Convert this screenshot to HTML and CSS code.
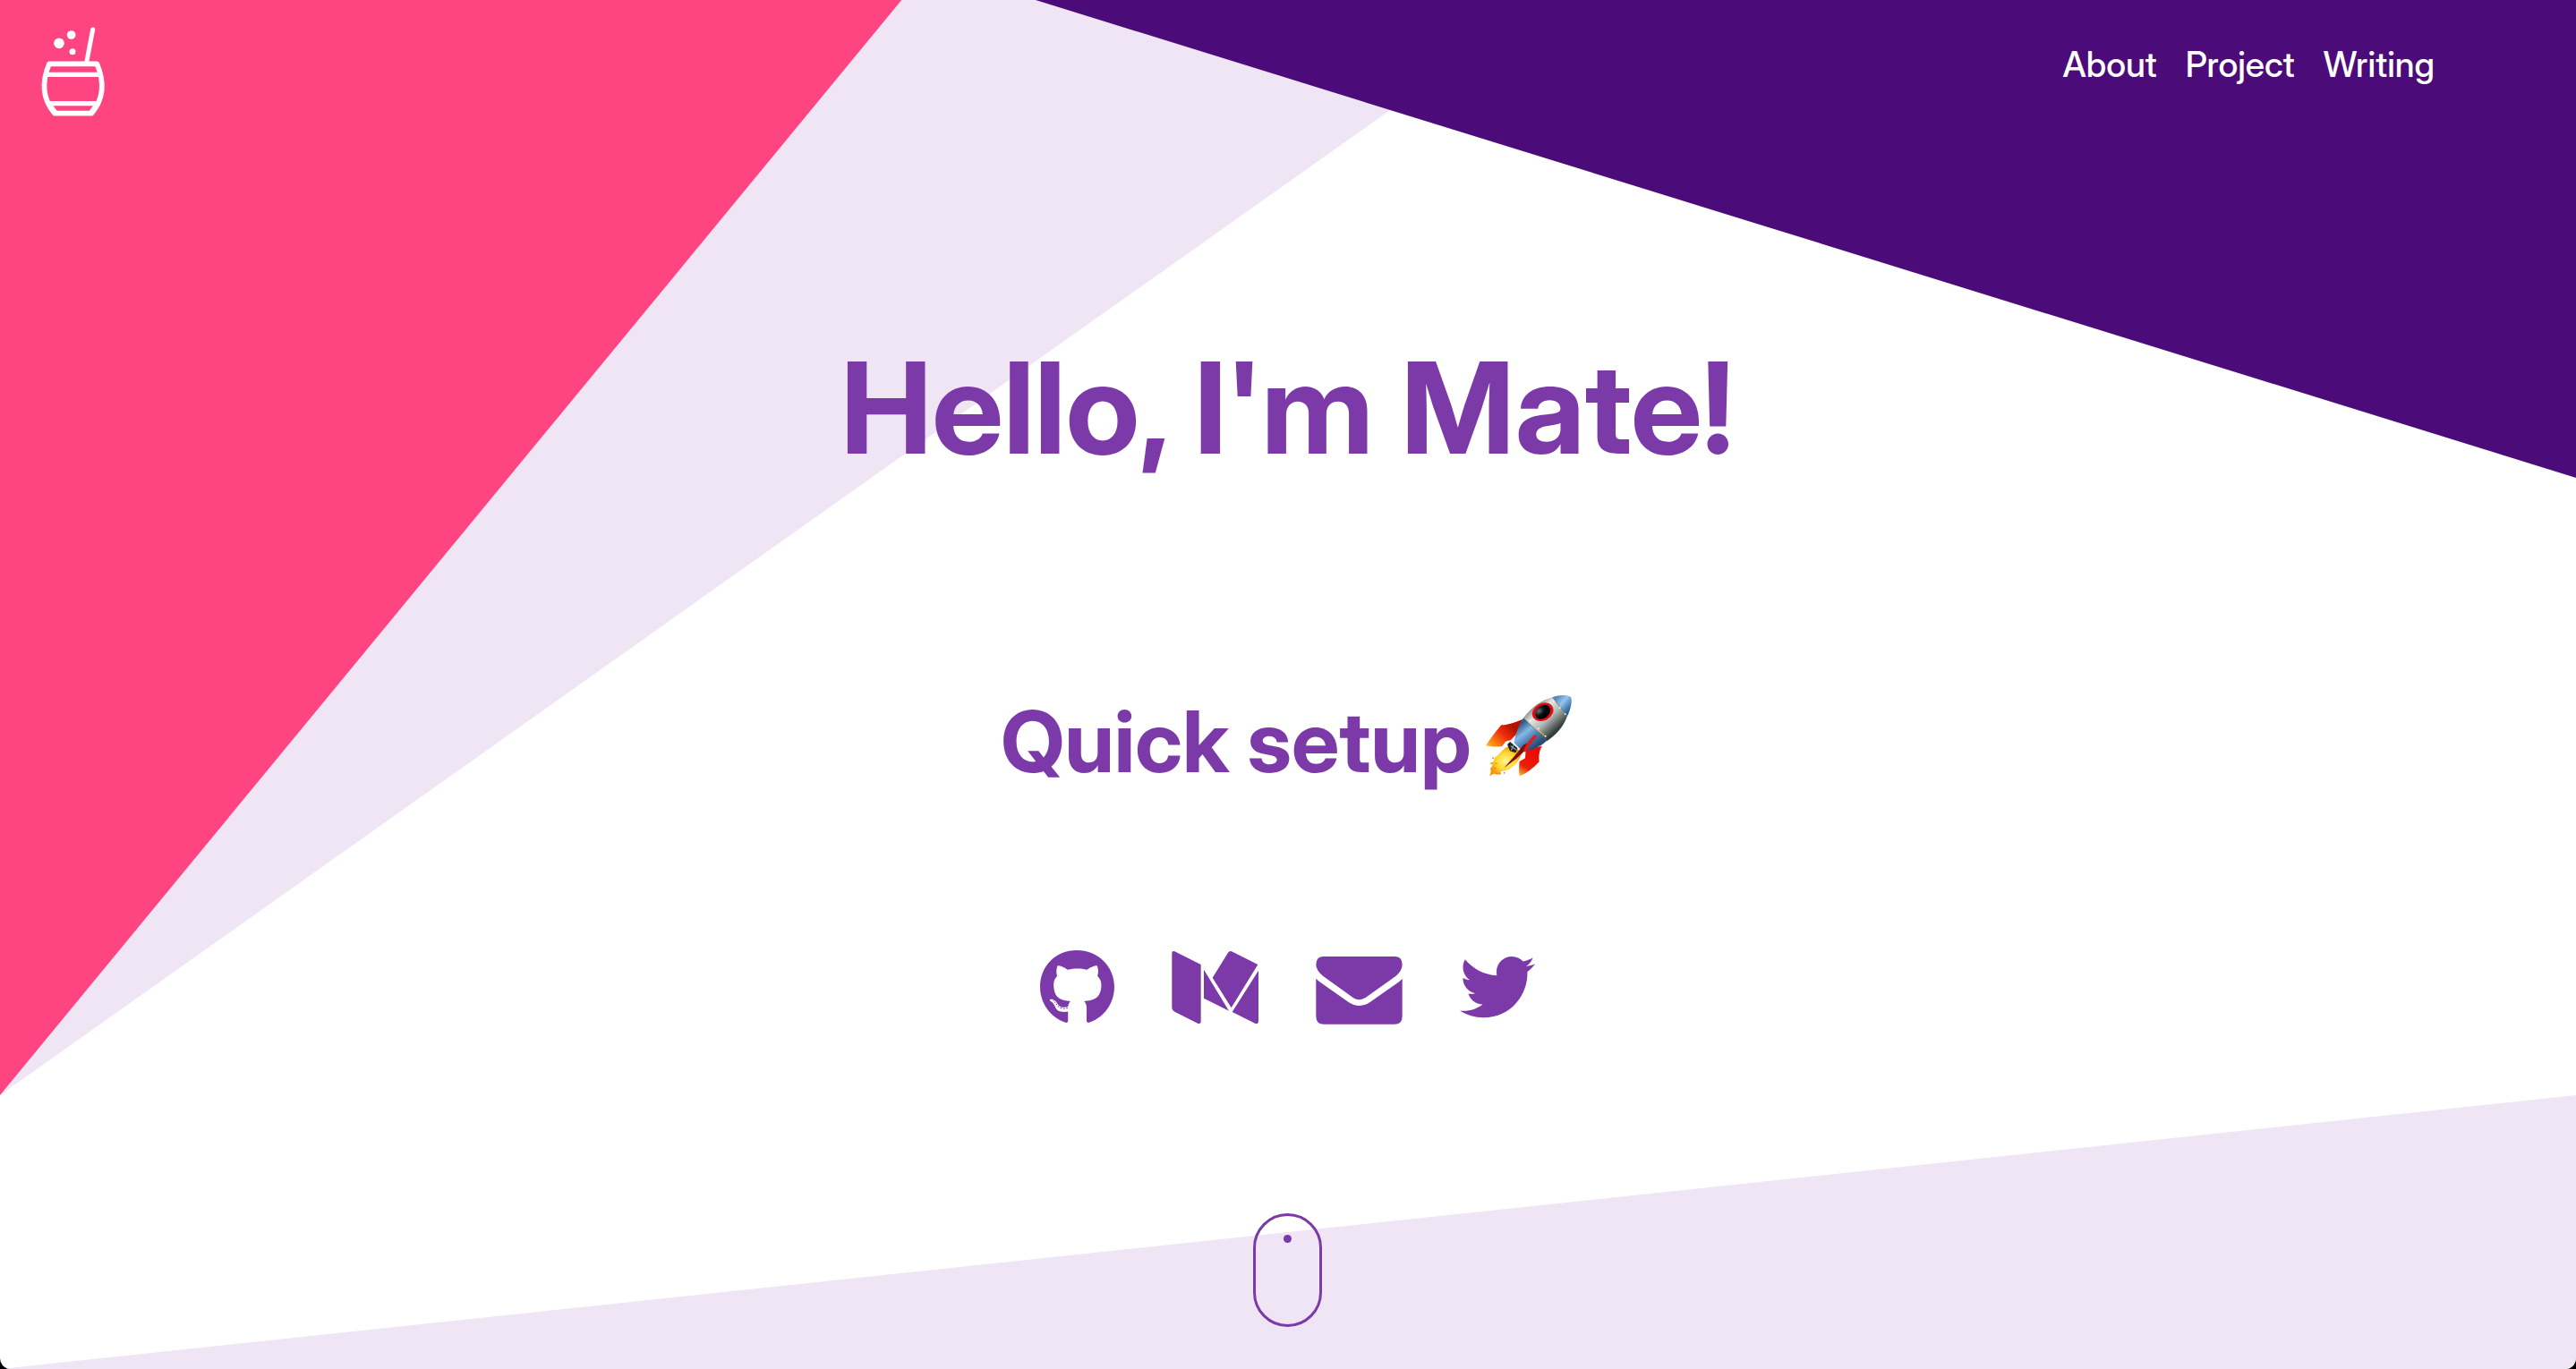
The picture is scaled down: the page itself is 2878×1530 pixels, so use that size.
FILE: index.html
```html
<!DOCTYPE html>
<html lang="en">
<head>
<meta charset="utf-8">
<meta name="viewport" content="width=device-width, initial-scale=1">
<title>Mate</title>
<link rel="stylesheet" href="styles.css">
</head>
<body>
<div class="shapes" aria-hidden="true">
  <div class="shape shape-light"></div>
  <div class="shape shape-pink"></div>
  <div class="shape shape-dark"></div>
  <div class="shape shape-floor"></div>
</div>
<header class="header">
  <a class="logo" href="#home" aria-label="Home">
    <svg viewBox="0 0 390 420" width="130" height="140" fill="none" stroke="#fff" stroke-width="16" stroke-linejoin="round" stroke-linecap="round">
      <path d="M105 184H265C288 238 293 295 247 350H123C77 295 82 238 105 184Z" stroke-width="17"/>
      <path d="M97 220H273M96 317H274" stroke-linecap="butt"/>
      <path d="M104 316L126 345M266 316L244 345" stroke-width="12"/>
      <path d="M251 69L230 180" stroke-width="15"/>
      <g fill="#fff" stroke="none"><circle cx="138" cy="115" r="17.500"/><circle cx="179" cy="87" r="14.500"/><circle cx="183" cy="143" r="10.500"/></g>
    </svg>
  </a>
  <nav class="nav" aria-label="Main">
    <a href="#about">About</a>
    <a href="#project">Project</a>
    <a href="#writing">Writing</a>
  </nav>
</header>
<main class="hero" id="home">
  <h1 class="title">Hello, I'm Mate!</h1>
  <h2 class="subtitle">Quick setup
    <svg class="rocket" viewBox="75 72 300 330" width="100" height="110" role="img" aria-label="rocket">
      <defs>
        <linearGradient id="body" gradientUnits="userSpaceOnUse" x1="230" y1="120" x2="310" y2="205"><stop offset="0" stop-color="#777f80"/><stop offset=".3" stop-color="#e4e6e2"/><stop offset=".6" stop-color="#b5bab6"/><stop offset="1" stop-color="#343d3c"/></linearGradient>
        <linearGradient id="blue" gradientUnits="userSpaceOnUse" x1="195" y1="180" x2="250" y2="250"><stop offset="0" stop-color="#315c8b"/><stop offset=".35" stop-color="#86b7e5"/><stop offset=".65" stop-color="#4c80b5"/><stop offset="1" stop-color="#294d75"/></linearGradient>
        <linearGradient id="nose" gradientUnits="userSpaceOnUse" x1="320" y1="85" x2="370" y2="130"><stop offset="0" stop-color="#5388bd"/><stop offset=".4" stop-color="#96c4ec"/><stop offset="1" stop-color="#174f88"/></linearGradient>
        <linearGradient id="fin" gradientUnits="userSpaceOnUse" x1="165" y1="180" x2="90" y2="255"><stop offset="0" stop-color="#b31200"/><stop offset=".4" stop-color="#f12f0b"/><stop offset="1" stop-color="#ffb719"/></linearGradient>
        <linearGradient id="fin2" gradientUnits="userSpaceOnUse" x1="250" y1="265" x2="194" y2="352"><stop offset="0" stop-color="#ef0803"/><stop offset=".65" stop-color="#e8200a"/><stop offset="1" stop-color="#ffc52c"/></linearGradient>
        <radialGradient id="flame"><stop offset="0" stop-color="#fff79b"/><stop offset=".6" stop-color="#ffd62a"/><stop offset="1" stop-color="#f39714"/></radialGradient>
        <radialGradient id="glass" cx=".35" cy=".25"><stop offset="0" stop-color="#667577"/><stop offset=".6" stop-color="#101a1c"/><stop offset="1" stop-color="#000"/></radialGradient>
      </defs>
      <path fill="url(#flame)" d="M157 253L147 257L134 269L121 282L110 291L108 302L99 308L104 316L96 327L98 335L94 352L109 344L122 348L130 337L147 334L159 329L180 313L192 296L202 276L181 255Z"/>
      <g fill="#ef941b"><circle cx="105" cy="292" r="3"/><circle cx="99" cy="310" r="3"/><circle cx="143" cy="341" r="3"/><circle cx="128" cy="343" r="4"/><circle cx="112" cy="326" r="4"/><circle cx="116" cy="310" r="3"/></g>
      <path fill="url(#fin)" d="M205 161C188 168 162 180 133 181C117 199 88 237 82 250C98 254 119 255 136 252L147 236L165 231L182 213Z"/>
      <path fill="url(#fin2)" d="M215 265L270 251C260 265 258 284 260 304C242 325 212 346 194 352C191 333 193 313 194 303L213 292Z"/>
      <path fill="url(#blue)" d="M207 157L287 232C264 256 233 268 203 268L175 240C181 209 192 180 207 157Z"/>
      <path fill="url(#body)" d="M207 157C235 121 266 98 304 88L354 151C340 189 317 214 287 234Z"/>
      <path fill="url(#nose)" d="M304 88C326 79 356 78 367 88C371 103 365 130 354 151Z"/>
      <path d="M207 157L287 234M304 88L354 151" fill="none" stroke="#5b6263" stroke-width="2"/>
      <path d="M250 191L281 219" stroke="#e5c94f" stroke-width="3"/>
      <path fill="#1a2425" d="M153 246L162 237L187 258L181 274L162 268Z"/>
      <path d="M164 251L183 264M174 248L166 266" stroke="#86999b" stroke-width="4"/>
      <path fill="#7f0e05" d="M142 325L179 283L208 247L231 238L211 268L182 295Z"/>
      <path d="M213 266Q222 243 246 219" stroke="#e71912" stroke-width="10" stroke-linecap="round" fill="none"/>
      <ellipse cx="272" cy="137" rx="37" ry="29" transform="rotate(-28 272 137)" fill="#e30b15"/>
      <ellipse cx="272" cy="137" rx="28" ry="21" transform="rotate(-38 272 137)" fill="url(#glass)"/>
      <g fill="#eef3f3"><circle cx="309" cy="101" r="3"/><circle cx="329" cy="123" r="3"/><circle cx="347" cy="144" r="3"/><circle cx="230" cy="165" r="3"/><circle cx="258" cy="193" r="3"/><circle cx="281" cy="218" r="3"/></g>
    </svg>
  </h2>
  <div class="social">
    <a href="#github" aria-label="GitHub"><svg width="83" height="88" viewBox="0 -10 496 526" fill="currentColor"><path d="M165.900 397.400c0 2-2.300 3.600-5.200 3.600-3.300.3-5.600-1.300-5.600-3.600 0-2 2.300-3.600 5.200-3.600 3-.3 5.600 1.300 5.600 3.600zm-31.100-4.500c-.7 2 1.300 4.300 4.300 4.900 2.600 1 5.600 0 6.200-2s-1.300-4.300-4.300-5.200c-2.600-.7-5.500.3-6.200 2.300zm44.200-1.700c-2.900.7-4.900 2.600-4.600 4.900.3 2 2.900 3.300 5.900 2.600 2.900-.7 4.900-2.600 4.600-4.600-.3-1.900-3-3.200-5.900-2.900zM244.800 8C106.100 8 0 113.300 0 252c0 110.900 69.800 205.800 169.500 239.200 12.800 2.300 17.300-5.600 17.300-12.100 0-6.200-.3-40.400-.3-61.400 0 0-70 15-84.700-29.800 0 0-11.400-29.100-27.800-36.600 0 0-22.900-15.700 1.600-15.400 0 0 24.900 2 38.600 25.800 21.900 38.600 58.600 27.500 72.900 20.900 2.300-16 8.800-27.100 16-33.700-55.900-6.200-112.300-14.300-112.300-110.500 0-27.500 7.600-41.300 23.600-58.900-2.600-6.500-11.100-33.300 2.600-67.900 20.900-6.500 69 27 69 27 20-5.600 41.500-8.500 62.800-8.500s42.800 2.900 62.800 8.500c0 0 48.100-33.600 69-27 13.700 34.700 5.200 61.400 2.600 67.900 16 17.700 25.800 31.500 25.800 58.900 0 96.500-58.900 104.200-114.800 110.500 9.200 7.900 17 22.900 17 46.400 0 33.700-.3 75.400-.3 83.600 0 6.500 4.600 14.400 17.300 12.100C428.200 457.800 496 362.900 496 252 496 113.300 383.500 8 244.800 8zM97.200 352.900c-1.300 1-1 3.300.7 5.200 1.600 1.600 3.900 2.300 5.200 1 1.300-1 1-3.300-.7-5.200-1.600-1.600-3.900-2.300-5.200-1zm-10.800-8.100c-.7 1.300.3 2.900 2.300 3.900 1.600 1 3.600.7 4.300-.7.700-1.300-.3-2.900-2.300-3.900-2-.6-3.600-.3-4.300.7zm32.400 35.600c-1.600 1.300-1 4.300 1.300 6.200 2.300 2.300 5.200 2.600 6.500 1 1.300-1.300.7-4.300-1.300-6.200-2.200-2.300-5.200-2.600-6.500-1zm-11.400-14.700c-1.600 1-1.600 3.600 0 5.900 1.600 2.300 4.300 3.300 5.600 2.300 1.600-1.300 1.600-3.900 0-6.200-1.400-2.300-4-3.300-5.600-2z"/></svg></a>
    <a href="#medium" aria-label="Medium"><svg width="97" height="88" viewBox="504 57 291 264" fill="currentColor"><path d="M505 76Q505 67 514 70L602 114V304Q602 314 593 312L517 274Q505 268 505 259ZM612 131L696 269L612 227ZM641 158L693 74Q698 67 705 70L793 114L704 259ZM795 134V303Q795 314 785 312L707 273Z"/></svg></a>
    <a href="#email" aria-label="Email"><svg width="97" height="88" viewBox="84 57 291 264" fill="currentColor"><path d="M110 87H349Q374 87 374 115Q374 134 352 153L258 220Q230 244 202 220L110 154Q85 134 85 115Q85 87 110 87ZM85 161Q91 167 100 174L194 240Q230 264 266 240L360 174Q369 167 374 161V287Q374 314 347 314H112Q85 314 85 287Z"/></svg></a>
    <a href="#twitter" aria-label="Twitter"><svg width="84" height="88" viewBox="0 -13 512 536" fill="currentColor"><path d="M459.370 151.716c.325 4.548.325 9.097.325 13.645 0 138.720-105.583 298.558-298.558 298.558-59.452 0-114.680-17.219-161.137-47.106 8.447.974 16.568 1.299 25.340 1.299 49.055 0 94.213-16.568 130.274-44.832-46.132-.975-84.792-31.188-98.112-72.772 6.498.974 12.995 1.624 19.818 1.624 9.421 0 18.843-1.300 27.614-3.573-48.081-9.747-84.143-51.980-84.143-102.985v-1.299c13.969 7.797 30.214 12.670 47.431 13.319-28.264-18.843-46.781-51.005-46.781-87.391 0-19.492 5.197-37.360 14.294-52.954 51.655 63.675 129.300 105.258 216.365 109.807-1.624-7.797-2.599-15.918-2.599-24.040 0-57.828 46.782-104.934 104.934-104.934 30.213 0 57.502 12.670 76.670 33.137 23.715-4.548 46.456-13.320 66.599-25.340-7.798 24.366-24.366 44.833-46.132 57.827 21.117-2.273 41.584-8.122 60.426-16.243-14.292 20.791-32.161 39.308-52.628 54.253z"/></svg></a>
  </div>
  <a class="scroll" href="#about" aria-label="Scroll down"></a>
</main>
</body>
</html>
```
FILE: styles.css
```css
* { box-sizing: border-box; }

html { background: #000; }

body {
  position: relative;
  display: flex;
  flex-direction: column;
  min-height: 100vh;
  margin: 0;
  overflow: hidden;
  border-radius: 0 0 12px 12px;
  background: #fff;
  color: #7c3aa9;
  font-family: "Inter Display", Inter, "Liberation Sans", sans-serif;
}

a { color: inherit; text-decoration: none; }
svg { display: block; }

/* Decorative triangles behind the content */
.shapes, .shape { position: absolute; inset: 0; }
.shape-light { background: #f0e5f5; clip-path: polygon(0 0, 60% 0, 0 80%); }
.shape-pink { background: #ff4581; clip-path: polygon(0 0, 35% 0, 0 80%); }
.shape-dark { background: #4b0c7a; clip-path: polygon(40.2% 0, 100% 0, 100% 34.9%); }
.shape-floor { background: #f0e5f5; clip-path: polygon(100% 80%, 100% 100%, 0 100%); }

.header, .hero { position: relative; }

.header {
  display: flex;
  justify-content: space-between;
  align-items: flex-start;
  height: 160px;
  padding: 10px 158px 10px 20px;
}

.nav {
  display: flex;
  gap: 32px;
  padding-top: 38px;
  color: #fff;
  font-size: 39px;
  font-weight: 500;
  line-height: 48px;
}

.hero {
  display: flex;
  flex-direction: column;
  align-items: center;
  padding: 211px 34px 47px 32px;
}

.title, .subtitle { margin: 0; font-weight: 700; }
.title { font-size: 142px; line-height: 168px; }

.subtitle {
  display: flex;
  align-items: center;
  gap: 14px;
  margin-top: 234px;
  font-size: 95px;
  line-height: 112px;
}

.social {
  display: flex;
  gap: 64px;
  margin-top: 174px;
}

.scroll {
  width: 77px;
  height: 127px;
  margin-top: 209px;
  border: 3px solid;
  border-radius: 39px;
}

.scroll::before {
  content: "";
  display: block;
  width: 9px;
  height: 9px;
  margin: 21px auto 0;
  border-radius: 50%;
  background: currentColor;
}
```
